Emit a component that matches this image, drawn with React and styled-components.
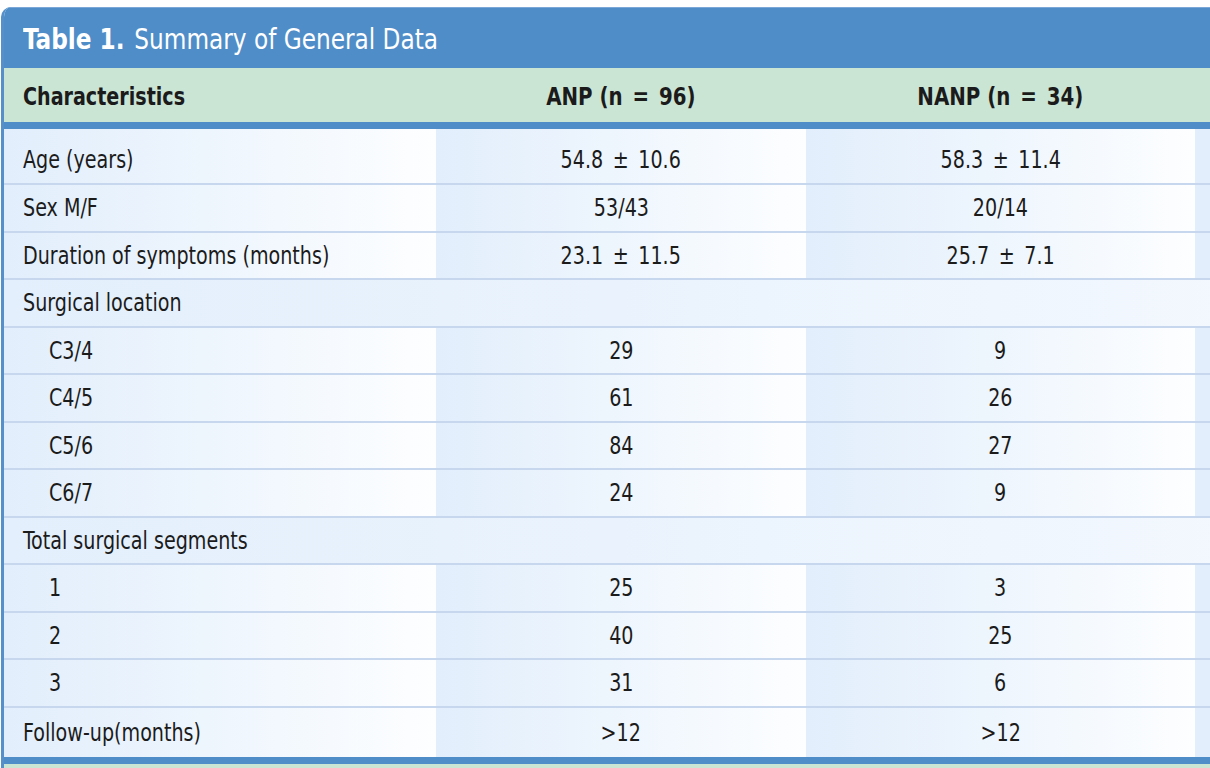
import React from 'react';
import styled, { createGlobalStyle } from 'styled-components';

const GlobalStyle = createGlobalStyle`
  html, body {
    margin: 0;
    padding: 0;
    background: #ffffff;
    overflow: hidden;
  }
  body {
    font-family: "DejaVu Sans Condensed", "Liberation Sans", sans-serif;
    color: #1b1b1b;
  }
`;

const Page = styled.div`
  width: 1210px;
  height: 768px;
  overflow: hidden;
  padding-top: 7px;
  padding-left: 1px;
  box-sizing: border-box;
`;

const Frame = styled.div`
  width: 1240px;
  border-left: 3px solid #5590ca;
  border-top-left-radius: 10px;
  overflow: hidden;
  background: #ffffff;
`;

const Caption = styled.div`
  height: 61px;
  background: #4f8dc9;
  border-top: 1px solid #7aa7d8;
  box-sizing: border-box;
  display: flex;
  align-items: center;
  padding-left: 19px;
  padding-top: 2px;
  color: #ffffff;
  font-size: 29px;
`;

const CaptionLabel = styled.b`
  font-weight: 700;
  margin-right: 11px;
`;

/* the source font is a narrow grotesque; squeeze the wider fallback */
const Txt = styled.span`
  display: inline-block;
  white-space: nowrap;
  transform: scaleX(${(p) => p.sx || 0.85});
  transform-origin: ${(p) => (p.center ? 'center' : 'left')} center;
`;

const Grid = styled.div`
  display: grid;
  grid-template-columns: 432px 370px 389px 49px;
  align-items: center;
  height: ${(p) => p.h}px;
  box-sizing: border-box;
  border-bottom: ${(p) => (p.last ? 'none' : '2px solid #c7d7ed')};
`;

const HeadRow = styled(Grid)`
  background: #cbe5d5;
  border-bottom: 7px solid #4f8dc9;
  font-weight: 700;
`;

const Cell = styled.div`
  height: 100%;
  display: flex;
  align-items: center;
  justify-content: ${(p) => (p.center ? 'center' : 'flex-start')};
  padding-left: ${(p) => (p.center ? 0 : p.indent ? 45 : 19)}px;
  padding-top: ${(p) => p.shift || 0}px;
  box-sizing: border-box;
  font-size: 25px;
  background: ${(p) =>
    p.plain ? 'transparent' : 'linear-gradient(to right, #e2eefc 0%, #edf5fd 45%, #fdfeff 100%)'};
`;

const EdgeCell = styled.div`
  height: 100%;
  background: ${(p) => (p.plain ? 'transparent' : '#e2eefc')};
`;

const SpanCell = styled.div`
  grid-column: 1 / span 4;
  height: 100%;
  display: flex;
  align-items: center;
  padding-left: 19px;
  box-sizing: border-box;
  font-size: 25px;
  background: linear-gradient(to right, #e3effc 0%, #eaf3fd 50%, #f3f8fe 100%);
`;

const BottomRule = styled.div`
  height: 7px;
  background: #4f8dc9;
`;

const Footer = styled.div`
  height: 10px;
  background: #cbe5d5;
`;

const rows = [
  { label: 'Age (years)', a: '54.8 ± 10.6', b: '58.3 ± 11.4', h: 56, shift: 6 },
  { label: 'Sex M/F', a: '53/43', b: '20/14' },
  { label: 'Duration of symptoms (months)', a: '23.1 ± 11.5', b: '25.7 ± 7.1' },
  { label: 'Surgical location', section: true },
  { label: 'C3/4', a: '29', b: '9', indent: true },
  { label: 'C4/5', a: '61', b: '26', indent: true },
  { label: 'C5/6', a: '84', b: '27', indent: true },
  { label: 'C6/7', a: '24', b: '9', indent: true },
  { label: 'Total surgical segments', section: true },
  { label: '1', a: '25', b: '3', indent: true },
  { label: '2', a: '40', b: '25', indent: true },
  { label: '3', a: '31', b: '6', indent: true },
  { label: 'Follow-up(months)', a: '>12', b: '>12', h: 49, last: true },
];

function fmt(v) {
  return v.replace(' ± ', '\u2002±\u2002').replace(' = ', '\u2002=\u2002');
}

export default function App() {
  return (
    <Page>
      <GlobalStyle />
      <Frame>
        <Caption>
          <Txt sx={0.89}>
            <CaptionLabel>Table 1.</CaptionLabel>
            <span>Summary of General Data</span>
          </Txt>
        </Caption>
        <HeadRow h={61}>
          <Cell plain shift={3}><Txt>Characteristics</Txt></Cell>
          <Cell plain center shift={3}><Txt center sx={0.88}>{fmt('ANP (n = 96)')}</Txt></Cell>
          <Cell plain center shift={3}><Txt center sx={0.88}>{fmt('NANP (n = 34)')}</Txt></Cell>
          <EdgeCell plain />
        </HeadRow>
        {rows.map((r) => (
          <Grid key={r.label} h={r.h || 47.5} last={r.last}>
            {r.section ? (
              <SpanCell><Txt>{r.label}</Txt></SpanCell>
            ) : (
              <>
                <Cell indent={r.indent} shift={r.shift}><Txt>{r.label}</Txt></Cell>
                <Cell center shift={r.shift}><Txt center>{fmt(r.a)}</Txt></Cell>
                <Cell center shift={r.shift}><Txt center>{fmt(r.b)}</Txt></Cell>
                <EdgeCell />
              </>
            )}
          </Grid>
        ))}
        <BottomRule />
        <Footer />
      </Frame>
    </Page>
  );
}
